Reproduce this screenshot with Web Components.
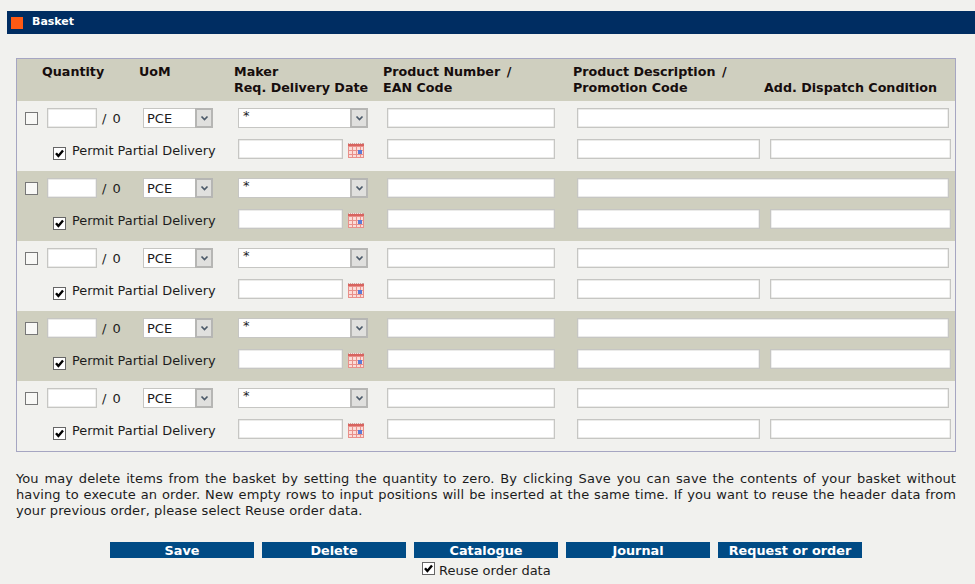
<!DOCTYPE html>
<html><head><meta charset="utf-8">
<style>
html,body{margin:0;padding:0;background:#f1f1ee}
body{font:13px/16px "DejaVu Sans",Verdana,sans-serif;color:#1c1c1c;width:975px;height:584px;overflow:hidden}
</style></head>
<body>
<basket-page></basket-page>
<script>
function def(name,css,html){
  customElements.define(name,class extends HTMLElement{
    constructor(){super();const s=this.attachShadow({mode:'open'});s.innerHTML='<style>'+css+'</style>'+html;}
  });
}
def('title-bar',`:host{display:flex;align-items:center;height:23px;margin:11px 0 0 7px;background:#002d62;color:#fff;font:bold 11px/14px "DejaVu Sans",sans-serif}
i{display:block;width:12px;height:12px;background:#ff5a14;margin:0 9px 0 4px}
span{position:relative;top:-1px}`,`<i></i><span><slot></slot></span>`);

def('text-field',`:host{display:block;box-sizing:border-box;height:20px;background:#fff;border:1px solid #c6c6c3;box-shadow:inset 0 0 0 .4px #d8d8d4}`,``);

def('drop-select',`:host{display:flex;box-sizing:border-box;height:20px;background:#fff;border:1px solid #c6c6c3;font:13px/20px "DejaVu Sans",sans-serif;color:#1c1c1c}
span{flex:1;padding-left:3px;white-space:nowrap}
:host([star]) span{padding-left:4px;line-height:14px}
b{display:flex;align-items:center;justify-content:center;flex:none;width:18px;height:20px;margin:-1px -1px -1px 0;box-sizing:border-box;background:#e0e0de;border:2px solid #b6b6b4}
svg{display:block}`,`<span><slot></slot></span><b><svg width="9" height="7" viewBox="0 0 9 7"><path d="M1.5 1.5 4.5 4.5 7.5 1.5" fill="none" stroke="#4c5a6a" stroke-width="1.7"/></svg></b>`);

def('check-box',`:host{display:block;box-sizing:border-box;width:13px;height:13px;border:1px solid #777;background:#f8f8f6}
:host([checked]){background:#fff;border-color:#666}
svg{display:none;width:11px;height:11px}
:host([checked]) svg{display:block}`,`<svg viewBox="0 0 11 11"><path d="M2 5.2 4.4 8 9 2.4" fill="none" stroke="#000" stroke-width="2.4"/></svg>`);

def('calendar-icon',`:host{display:block;width:16px;height:15px}svg{display:block}`,`<svg width="16" height="15" viewBox="0 0 16 15" shape-rendering="crispEdges">
<rect width="16" height="15" fill="#e8908a"/>
<rect width="16" height="1" fill="#c9a5a0"/>
<path d="M1 0h1v1H1zM3 0h1v1H3zM5 0h1v1H5zM7 0h1v1H7zM9 0h1v1H9zM11 0h1v1h-1zM13 0h1v1h-1z" fill="#f2e4e2"/>
<rect y="1" width="16" height="2" fill="#d8635e"/>
<g fill="#fbdcd8"><rect x="1" y="4" width="3" height="3"/><rect x="5" y="4" width="3" height="3"/><rect x="9" y="4" width="3" height="3"/><rect x="13" y="4" width="2" height="3"/>
<rect x="1" y="8" width="3" height="3"/><rect x="5" y="8" width="3" height="3"/><rect x="9" y="8" width="3" height="3"/><rect x="13" y="8" width="2" height="3"/>
<rect x="1" y="12" width="3" height="2"/><rect x="5" y="12" width="3" height="2"/><rect x="9" y="12" width="3" height="2"/><rect x="13" y="12" width="2" height="2"/></g>
<rect x="10" y="7" width="4" height="4" fill="#5a7bd6"/>
</svg>`);

const cols='grid-template-columns:22px 96px 95px 149px 190px 193px 1fr;';
def('basket-head',`:host{display:grid;${cols}padding:5px 0 5px 8px;background:#cfcfbf;font:bold 12.7px/16px "DejaVu Sans",sans-serif;color:#160d0d}
div{margin-left:-4px;white-space:nowrap}
.q{grid-column:1/3;margin-left:17px}
.e{align-self:end;margin-left:-6px}
s{text-decoration:none;margin-left:2px}`,`
<div class="q">Quantity</div><div>UoM</div><div>Maker<br>Req. Delivery Date</div><div>Product Number <s>/</s><br>EAN Code</div><div>Product Description <s>/</s><br>Promotion Code</div><div class="e">Add. Dispatch Condition</div>`);

def('basket-row',`:host{display:grid;${cols}grid-template-rows:20px 20px;row-gap:11px;padding:7px 5px 12px 8px;background:#f1f1ee;align-items:center}
:host([alt]){background:#cfcfbf}
.qty{display:flex;align-items:center;gap:5px;white-space:nowrap;font-size:13px}
.qty text-field{width:50px}
.qty span{color:#1c1c1c;word-spacing:2px;position:relative;top:1px}
.uom{width:70px}
.mk{width:130px}
.pd{width:168px}
.ds{grid-column:6/8;width:372px}
.pp{grid-column:1/4;display:flex;align-items:center;padding-left:28px}
.pp check-box{position:relative;top:4px;margin-right:6px}
.pp span{position:relative;top:2px;white-space:nowrap;font-size:12.9px}
.dt{display:flex;align-items:center;gap:5px}
.dt text-field{width:105px}
.dt calendar-icon{position:relative;top:1px}
.d2{width:183px}
.ad{width:181px}`,`
<check-box></check-box>
<div class="qty"><text-field></text-field><span>/ 0</span></div>
<drop-select class="uom">PCE</drop-select>
<drop-select class="mk" star>*</drop-select>
<text-field class="pd"></text-field>
<text-field class="ds"></text-field>
<div class="pp"><check-box checked></check-box><span>Permit Partial Delivery</span></div>
<div class="dt"><text-field></text-field><calendar-icon></calendar-icon></div>
<text-field class="pd"></text-field>
<text-field class="d2"></text-field>
<text-field class="ad"></text-field>`);

def('basket-table',`:host{display:block;box-sizing:border-box;width:940px;height:394px;margin:24px 0 0 16px;border:1px solid #a6a6c2}`,
`<basket-head></basket-head><basket-row></basket-row><basket-row alt></basket-row><basket-row></basket-row><basket-row alt></basket-row><basket-row></basket-row>`);

def('help-text',`:host{display:block;width:940px;margin:19px 0 0 16px;text-align:justify;font:13px/16px "DejaVu Sans",sans-serif;letter-spacing:.1px;color:#1c1c1c}`,`<slot></slot>`);

def('action-button',`:host{display:block;width:144px;height:16px;background:#004b85;color:#fff;text-align:center;font:bold 12.8px/17px "DejaVu Sans",sans-serif;white-space:nowrap}`,`<slot></slot>`);

def('button-row',`:host{display:flex;gap:8px;margin:23px 0 0 110px}`,`<slot></slot>`);

def('reuse-option',`:host{display:flex;align-items:center;margin:4px 0 0 422px;height:16px}
check-box{margin-right:4px;position:relative;top:-2px}
span{white-space:nowrap;position:relative;top:1px}`,`<check-box checked></check-box><span><slot></slot></span>`);

def('basket-page',`:host{display:block}`,`
<title-bar>Basket</title-bar>
<basket-table></basket-table>
<help-text>You may delete items from the basket by setting the quantity to zero. By clicking Save you can save the contents of your basket without having to execute an order. New empty rows to input positions will be inserted at the same time. If you want to reuse the header data from your previous order, please select Reuse order data.</help-text>
<button-row><action-button>Save</action-button><action-button>Delete</action-button><action-button>Catalogue</action-button><action-button>Journal</action-button><action-button>Request or order</action-button></button-row>
<reuse-option>Reuse order data</reuse-option>`);
</script>
</body></html>
